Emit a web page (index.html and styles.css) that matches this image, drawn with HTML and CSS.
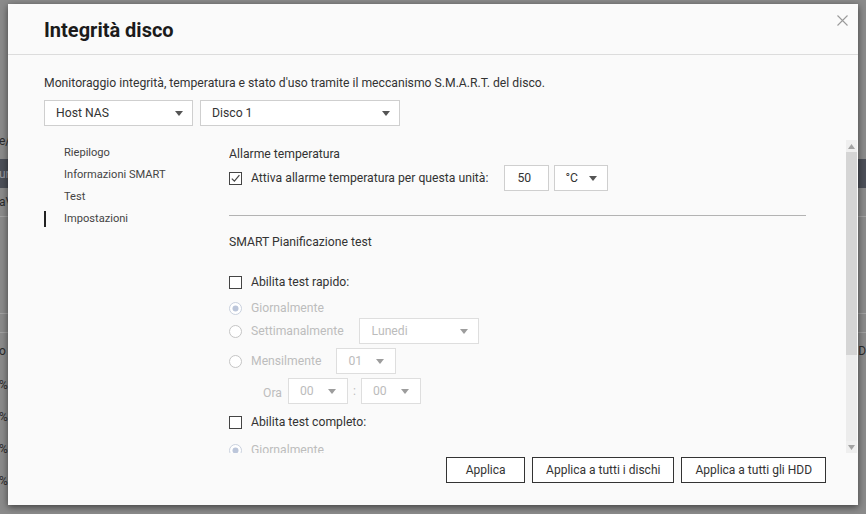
FILE: index.html
```html
<!DOCTYPE html>
<html lang="it">
<head>
<meta charset="utf-8">
<title>Integrità disco</title>
<link rel="stylesheet" href="styles.css">
</head>
<body>
<div class="page">
  <div class="bg-row bg-top"></div>
  <div class="bg-row bg-t1"><span class="bg-txt">e/</span></div>
  <div class="bg-row bg-gap"></div>
  <div class="bg-row bg-band"><span class="bg-txt light">ur</span></div>
  <div class="bg-row bg-t2"><span class="bg-txt">a\</span></div>
  <div class="bg-row bg-blank"></div>
  <div class="bg-row bg-line19"></div>
  <div class="bg-row bg-o"><span class="bg-txt">o</span><span class="bg-txt right">D</span></div>
  <div class="bg-row bg-pct"><span class="bg-txt">%</span></div>
  <div class="bg-row bg-pct"><span class="bg-txt">%</span></div>
  <div class="bg-row bg-pct"><span class="bg-txt">%</span></div>
  <div class="bg-row bg-pct"><span class="bg-txt">%</span></div>
</div>

<div class="dialog">
  <div class="dlg-head">
    <h1 class="title">Integrità disco</h1>
    <button class="close" aria-label="Chiudi">
      <svg width="11" height="11" viewBox="0 0 11 11"><path d="M0.5 0.5 L10.5 10.5 M10.5 0.5 L0.5 10.5" stroke="#9a9a9a" stroke-width="1.1" fill="none"/></svg>
    </button>
  </div>

  <div class="dlg-body">
    <p class="desc">Monitoraggio integrità, temperatura e stato d'uso tramite il meccanismo S.M.A.R.T. del disco.</p>
    <div class="pickers">
      <div class="select sel-host"><span>Host NAS</span><i class="caret"></i></div>
      <div class="select sel-disk"><span>Disco 1</span><i class="caret"></i></div>
    </div>

    <div class="main">
      <ul class="nav">
        <li>Riepilogo</li>
        <li>Informazioni SMART</li>
        <li>Test</li>
        <li class="active">Impostazioni</li>
      </ul>

      <div class="content">
        <div class="sec-title first">Allarme temperatura</div>
        <div class="row temp-row">
          <span class="check">
            <svg width="13" height="13" viewBox="0 0 13 13"><rect x="0.5" y="0.5" width="12" height="12" fill="#fff" stroke="#444"/><path d="M2.8 6.6 L5.4 9.2 L10.4 3.2" stroke="#444" stroke-width="1.2" fill="none"/></svg>
          </span>
          <span class="lbl">Attiva allarme temperatura per questa unità:</span>
          <div class="input num">50</div>
          <div class="select sel-unit"><span>°C</span><i class="caret"></i></div>
        </div>

        <hr class="sep">

        <div class="sec-title second">SMART Pianificazione test</div>

        <div class="row chk-row quick">
          <span class="check">
            <svg width="13" height="13" viewBox="0 0 13 13"><rect x="0.5" y="0.5" width="12" height="12" fill="#fff" stroke="#444"/></svg>
          </span>
          <span class="lbl">Abilita test rapido:</span>
        </div>

        <div class="row radio-row r-daily">
          <span class="radio on"><svg width="13" height="13" viewBox="0 0 13 13"><circle cx="6.5" cy="6.5" r="6" fill="#fff" stroke="#c9d0dd"/><circle cx="6.5" cy="6.5" r="3" fill="#bcc6da"/></svg></span>
          <span class="lbl dis">Giornalmente</span>
        </div>

        <div class="row radio-row r-week">
          <span class="radio"><svg width="13" height="13" viewBox="0 0 13 13"><circle cx="6.5" cy="6.5" r="6" fill="#fff" stroke="#c4c4c4"/></svg></span>
          <span class="lbl dis">Settimanalmente</span>
          <div class="select dis-sel sel-day"><span>Lunedi</span><i class="caret"></i></div>
        </div>

        <div class="row radio-row r-month">
          <span class="radio"><svg width="13" height="13" viewBox="0 0 13 13"><circle cx="6.5" cy="6.5" r="6" fill="#fff" stroke="#c4c4c4"/></svg></span>
          <span class="lbl dis">Mensilmente</span>
          <div class="select dis-sel sel-small"><span>01</span><i class="caret"></i></div>
        </div>

        <div class="row time-row">
          <span class="lbl dis ora">Ora</span>
          <div class="select dis-sel sel-small"><span>00</span><i class="caret"></i></div>
          <span class="colon">:</span>
          <div class="select dis-sel sel-small"><span>00</span><i class="caret"></i></div>
        </div>

        <div class="row chk-row full">
          <span class="check">
            <svg width="13" height="13" viewBox="0 0 13 13"><rect x="0.5" y="0.5" width="12" height="12" fill="#fff" stroke="#444"/></svg>
          </span>
          <span class="lbl">Abilita test completo:</span>
        </div>

        <div class="row radio-row r-daily2">
          <span class="radio on"><svg width="13" height="13" viewBox="0 0 13 13"><circle cx="6.5" cy="6.5" r="6" fill="#fff" stroke="#c9d0dd"/><circle cx="6.5" cy="6.5" r="3" fill="#bcc6da"/></svg></span>
          <span class="lbl dis">Giornalmente</span>
        </div>
      </div>

      <div class="scrollbar">
        <div class="sb-btn"><svg width="7" height="5" viewBox="0 0 7 5"><path d="M0 5 L3.5 0 L7 5 Z" fill="#a3a3a3"/></svg></div>
        <div class="sb-thumb"></div>
        <div class="sb-track"></div>
        <div class="sb-btn"><svg width="7" height="5" viewBox="0 0 7 5"><path d="M0 0 L7 0 L3.5 5 Z" fill="#a3a3a3"/></svg></div>
      </div>
    </div>
  </div>

  <div class="footer">
    <button class="btn">Applica</button>
    <button class="btn">Applica a tutti i dischi</button>
    <button class="btn">Applica a tutti gli HDD</button>
  </div>
</div>
</body>
</html>
```

FILE: styles.css
```css
* { box-sizing: border-box; }

html, body {
  margin: 0;
  padding: 0;
}

body {
  width: 866px;
  height: 514px;
  overflow: hidden;
  background: #8b8b8b;
  font-family: Roboto, "Liberation Sans", Arial, sans-serif;
  color: #333;
  position: relative;
}

/* ---------- dimmed page behind the dialog ---------- */
.page {
  display: flex;
  flex-direction: column;
  width: 866px;
}

.bg-row {
  display: flex;
  justify-content: space-between;
  align-items: center;
  font-size: 12px;
  color: #2b2b2b;
}

.bg-top { height: 132px; }
.bg-t1 { height: 18px; }
.bg-gap { height: 9px; }
.bg-band { height: 29px; background: #4c4f58; }
.bg-t2 { height: 29px; border-bottom: 1px solid #a2a2a2; }
.bg-blank { height: 97px; border-bottom: 1px solid #a2a2a2; }
.bg-line19 { height: 19px; border-bottom: 1px solid #a2a2a2; }
.bg-o { height: 36px; }
.bg-pct { height: 32px; }

.bg-txt {
  display: block;
  margin-left: -1px;
  line-height: 14px;
}

.bg-txt.light { color: #9a9ca4; }
.bg-txt.right { margin-left: auto; }

/* ---------- dialog ---------- */
.dialog {
  position: absolute;
  left: 8px;
  top: 4px;
  width: 850px;
  height: 501px;
  background: #fafafa;
  box-shadow: 0 2px 7px rgba(0, 0, 0, 0.55);
  display: flex;
  flex-direction: column;
}

.dlg-head {
  height: 51px;
  border-bottom: 1px solid #dcdcdc;
  display: flex;
  justify-content: space-between;
  align-items: flex-start;
  padding: 0 10px 0 36px;
}

.title {
  margin: 0;
  font-size: 20px;
  font-weight: 700;
  color: #1b1b1b;
  line-height: 52px;
}

.close {
  margin-top: 11px;
  width: 11px;
  height: 11px;
  padding: 0;
  border: 0;
  background: transparent;
  display: block;
}

.close svg { display: block; }

.dlg-body {
  padding: 0 1px 0 36px;
}

.desc {
  margin: 17px 0 0;
  font-size: 12.2px;
  line-height: 23px;
  color: #333;
}

.pickers {
  display: flex;
  gap: 7px;
  margin-top: 5px;
}

/* ---------- selects / inputs ---------- */
.select,
.input {
  height: 26px;
  border: 1px solid #cfcfcf;
  background: #fff;
  display: flex;
  align-items: center;
  font-size: 12.2px;
  color: #333;
}

.select {
  justify-content: space-between;
  padding: 0 9px 0 11px;
}

.caret {
  display: block;
  width: 0;
  height: 0;
  border-left: 4px solid transparent;
  border-right: 4px solid transparent;
  border-top: 5px solid #555;
}

.sel-host { width: 149px; }
.sel-disk { width: 200px; }

.input { padding-left: 12px; }
.num { width: 45px; margin-left: 16px; }
.sel-unit { width: 54px; margin-left: 5px; padding-left: 10px; padding-right: 10px; }

.dis-sel {
  border-color: #dedede;
  color: #bcbcbc;
}

.dis-sel .caret { border-top-color: #9d9d9d; }

.sel-day { width: 120px; margin-left: 15px; padding-left: 12px; padding-right: 10px; }
.sel-small { width: 60px; padding-left: 11px; padding-right: 11px; }
.r-month .sel-small { margin-left: 15px; }

/* ---------- main area ---------- */
.main {
  margin-top: 14px;
  height: 313px;
  display: grid;
  grid-template-columns: 185px 1fr 11px;
}

.nav {
  list-style: none;
  margin: 0;
  padding: 2px 0 0;
}

.nav li {
  position: relative;
  padding-left: 20px;
  font-size: 11.1px;
  line-height: 22px;
  color: #444;
}

.nav li.active::before {
  content: "";
  position: absolute;
  left: 0;
  top: 3px;
  width: 2px;
  height: 16px;
  background: #222;
}

.content {
  overflow: hidden;
  height: 313px;
  font-size: 12.2px;
}

.sec-title {
  line-height: 20px;
  color: #333;
}

.sec-title.first { margin-top: 4px; }
.sec-title.second { margin-top: 16px; }

.row {
  display: flex;
  align-items: center;
}

.check, .radio {
  display: block;
  width: 13px;
  height: 13px;
  margin-right: 9px;
}

.check svg, .radio svg { display: block; }

.lbl { white-space: nowrap; color: #333; }
.lbl.dis { color: #bdbdbd; }

.temp-row { margin-top: 1px; height: 26px; }

.sep {
  margin: 24px 40px 0 0;
  border: 0;
  height: 1px;
  background: #b3b3b3;
}

.chk-row { height: 20px; }
.quick { margin-top: 20px; }
.full { margin-top: 8px; }

.radio-row { min-height: 20px; }
.r-daily { margin-top: 6px; }
.r-week { margin-top: 0; height: 26px; }
.r-month { margin-top: 4px; height: 26px; }
.r-daily2 { margin-top: 8px; }

.time-row {
  margin-top: 4px;
  height: 26px;
}

.time-row .ora {
  display: block;
  width: 53px;
  margin-right: 6px;
  text-align: right;
  padding-top: 3px;
}

.colon {
  color: #bdbdbd;
  width: 13px;
  text-align: center;
}

/* ---------- custom scrollbar ---------- */
.scrollbar {
  display: flex;
  flex-direction: column;
  background: #ececec;
  height: 313px;
}

.sb-btn {
  height: 12px;
  display: flex;
  align-items: center;
  justify-content: center;
  background: #efefef;
}

.sb-btn svg { display: block; }

.sb-thumb {
  height: 203px;
  background: #d5d5d5;
}

.sb-track { flex: 1; }

/* ---------- footer ---------- */
.footer {
  margin-top: 4px;
  display: flex;
  justify-content: flex-end;
  gap: 7px;
  padding-right: 32px;
}

.btn {
  height: 26px;
  min-width: 79px;
  padding: 0 13px;
  border: 1px solid #333;
  background: #fff;
  font-family: Roboto, "Liberation Sans", Arial, sans-serif;
  font-size: 12px;
  color: #333;
}
```
